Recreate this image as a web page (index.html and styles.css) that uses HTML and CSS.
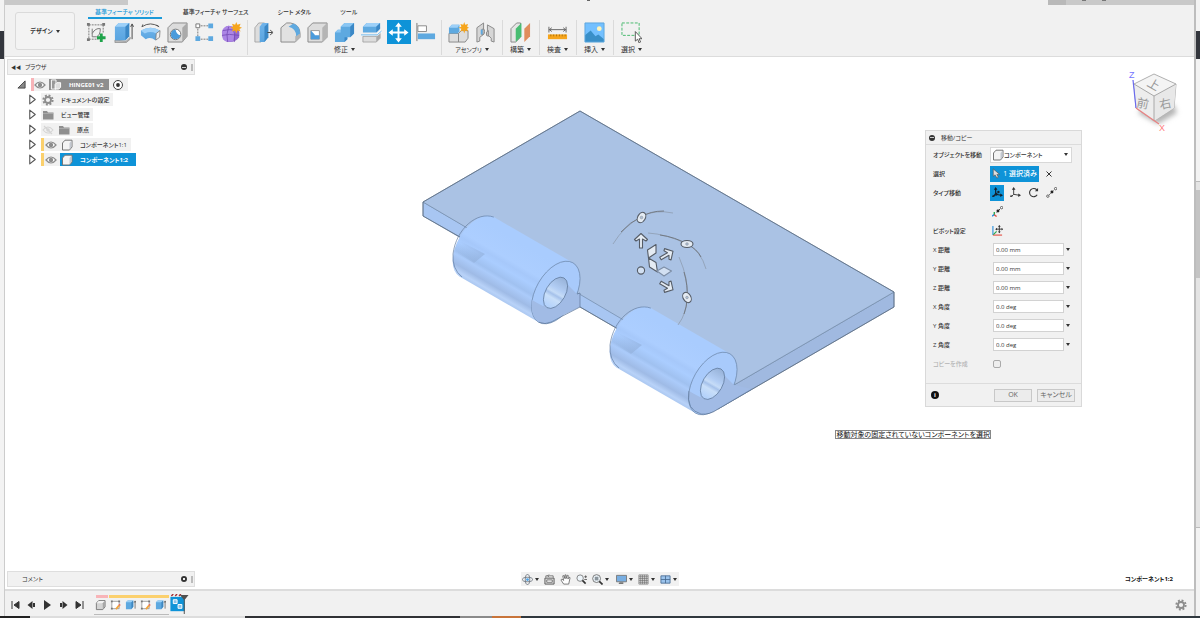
FILE: index.html
```html
<!DOCTYPE html>
<html lang="ja">
<head>
<meta charset="utf-8">
<title>HINGE01 v2</title>
<link rel="stylesheet" href="styles.css">
</head>
<body>
<svg class="defs" aria-hidden="true">
  <defs>
    <symbol id="i-eye" viewBox="0 0 12 12"><path d="M1 6Q6 0 11 6Q6 12 1 6Z" fill="#fff" stroke="#8c8c8c" stroke-width="1.2"/><circle cx="6" cy="6" r="2.2" fill="#8c8c8c"/></symbol>
    <symbol id="i-eyeoff" viewBox="0 0 12 12"><path d="M1 6Q6 0 11 6Q6 12 1 6ZM2 2L10 10" fill="none" stroke="#d4d4d4" stroke-width="1.1"/><circle cx="6" cy="6" r="1.8" fill="#d4d4d4"/></symbol>
    <symbol id="i-folder" viewBox="0 0 12 12"><path d="M1 2H5L6 3.5H11.500V10.500H1Z" fill="#8f8f8f"/><path d="M1 4.500H11" stroke="#bbb" stroke-width=".6"/></symbol>
    <symbol id="i-part" viewBox="0 0 12 12"><path d="M1.500 4L4 1.200H11V8L8.500 11H1.500Z" fill="#f4f4f4" stroke="#777" stroke-linejoin="round"/><path d="M8.500 4L10.500 1.700V8L8.500 10.500Z" fill="#c3c8d0"/></symbol>
    <symbol id="i-solid" viewBox="0 0 12 12"><path d="M1.500 4L4 1.200H11V8L8.500 11H1.500Z" fill="#d3d3d3" stroke="#777" stroke-linejoin="round"/><path d="M1.800 4L4 1.500H10.500L8.500 4Z" fill="#f0f0f0"/><path d="M8.500 4L10.500 1.700V8L8.500 10.500Z" fill="#a5a5a5"/></symbol>
    <symbol id="i-gear" viewBox="0 0 12 12"><circle cx="6" cy="6" r="4.600" fill="none" stroke="#8d8d8d" stroke-width="2" stroke-dasharray="1.900 1.710"/><circle cx="6" cy="6" r="3" fill="none" stroke="#8d8d8d" stroke-width="1.800"/></symbol>
    <symbol id="i-tri" viewBox="0 0 8 10"><path d="M1.500 1L6.500 5L1.500 9Z" fill="#fff" stroke="#555" stroke-linejoin="round"/></symbol>
    <symbol id="i-sketch" viewBox="0 0 12 12"><path d="M2 2H10V10H2Z" fill="#fff" stroke="#888" stroke-width=".8"/><path d="M1 1h2v2h-2zM9 1h2v2h-2zM1 9h2v2h-2z" fill="#777"/><path d="M6.500 10.500L10 6.500" stroke="#f2a33a" stroke-width="2"/><path d="M10 6.500L11 5.400" stroke="#e7665c" stroke-width="2"/></symbol>
    <symbol id="i-extr" viewBox="0 0 12 12"><path d="M1 3L3 1H9V8L7 10.500H1Z" fill="#5ea9e0"/><path d="M1 3L3 1H9L7 3Z" fill="#9bd0f5"/><path d="M7 3L9 1V8L7 10.500Z" fill="#3d86c0"/><path d="M11 10V2M10 3.500L11 1.500L12 3.500" fill="none" stroke="#555" stroke-width=".8"/></symbol>
    <linearGradient id="g-blue" x2="0" y2="1"><stop stop-color="#6fb3ea"/><stop offset="1" stop-color="#5aa5e0"/></linearGradient>
    <linearGradient id="g-cyl" gradientUnits="userSpaceOnUse" x1="534" y1="250" x2="499" y2="310">
      <stop stop-color="#a9ccfe"/><stop offset=".3" stop-color="#acceff"/><stop offset=".37" stop-color="#a6c8fa"/><stop offset=".45" stop-color="#aacdff"/><stop offset=".57" stop-color="#a0c1f0"/><stop offset=".62" stop-color="#abcbfa"/><stop offset=".74" stop-color="#9fbbe6"/><stop offset=".82" stop-color="#b8d2f8"/><stop offset=".9" stop-color="#a3c1ec"/><stop offset="1" stop-color="#acd0ff"/>
    </linearGradient>
    <linearGradient id="g-patch" gradientUnits="userSpaceOnUse" x1="458" y1="245" x2="484" y2="260"><stop stop-color="#88a4cc" stop-opacity="0"/><stop offset="1" stop-color="#88a4cc" stop-opacity=".5"/></linearGradient>
    <linearGradient id="g-hole" gradientUnits="userSpaceOnUse" x1="-15" y1="0" x2="15" y2="0">
      <stop stop-color="#b4d2fb"/><stop offset=".3" stop-color="#c9dff9"/><stop offset=".42" stop-color="#a5c1ea"/><stop offset=".5" stop-color="#c6dcf7"/><stop offset=".65" stop-color="#b2cdf4"/><stop offset="1" stop-color="#9bb6dc"/>
    </linearGradient>
  </defs>
</svg>

<div class="desktop">
  <div class="edge edge-left"><i class="edge-dark"></i></div>
  <div class="app">
    <header class="header">
      <div class="titlebar"><span class="tb-left"></span><span class="tb-mark"></span><span class="tb-right"><i></i><b></b><b></b></span></div>
      <div class="ribbon">
        <button class="workspace">デザイン <span class="caret"></span></button>
        <div class="ribbon-main">
          <nav class="tabs">
            <button class="tab active">基準フィーチャ ソリッド</button>
            <button class="tab">基準フィーチャ サーフェス</button>
            <button class="tab">シート メタル</button>
            <button class="tab">ツール</button>
          </nav>
          <div class="groups">
            <section class="group">
              <div class="tools">
                <button class="tool" aria-label="スケッチを作成"><svg viewBox="0 0 22 22"><path d="M3 3H18M3 3V18H13M18 3V12" fill="none" stroke="#777" stroke-dasharray="2 1"/><path d="M6.500 7V15.500H11Q15 14 15 7Q10 6 6.500 12" fill="none" stroke="#777"/><path d="M1 1h3v3H1zM17 1h3v3h-3zM1 17h3v3H1z" fill="#777"/><path d="M16 12V21M11.500 16.500H20.500" stroke="#1ea34a" stroke-width="3"/></svg></button>
                <button class="tool" aria-label="押し出し"><svg viewBox="0 0 22 22"><path d="M2 19L14 20L18 16V18L14 21.500H2Z" fill="#bbb" stroke="#777" stroke-width=".6"/><path d="M2 5L6 1H17V15L13 19H2Z" fill="url(#g-blue)"/><path d="M2 5L6 1H17L13 5Z" fill="#9dd0f8"/><path d="M13 5L17 1V15L13 19Z" fill="#3b88c6"/><path d="M20 18V3M18.500 5L20 2L21.500 5" fill="none" stroke="#444"/></svg></button>
                <button class="tool" aria-label="回転"><svg viewBox="0 0 22 22"><path d="M2 5Q11 -1 20 5M2 5L3 2.500M20 5L17.500 3" fill="none" stroke="#555"/><path d="M1 9Q11 3 21 9L20 15L16 19Q11 15 6 18L1 14Z" fill="url(#g-blue)"/><path d="M1 9Q11 3 21 9L17 12Q11 9 5 12Z" fill="#9dd0f8"/><path d="M21 9L17 12L16.500 19L20.500 16Z" fill="#eee" stroke="#777" stroke-width=".8"/></svg></button>
                <button class="tool" aria-label="穴"><svg viewBox="0 0 22 22"><path d="M1 6L6 1H21V15L16 21H1Z" fill="#dcdcdc" stroke="#888"/><path d="M16 6L21 1V15L16 21Z" fill="#aaa"/><circle cx="9" cy="13" r="5.500" fill="#fff" stroke="#777"/><path d="M9 8Q10 13 14 14A5 5 0 1 1 9 8Z" fill="#4b9bdb"/></svg></button>
                <button class="tool" aria-label="パターン"><svg viewBox="0 0 22 22"><path d="M4 4H18M4 4V18M4 18H18" fill="none" stroke="#777" stroke-dasharray="2 1"/><path d="M2 2h4v4H2z" fill="#fff" stroke="#777"/><path d="M15 1.500h5v5h-5zM1.500 15h5v5h-5zM15 15h5v5h-5z" fill="#5ea9e0"/></svg></button>
                <button class="tool" aria-label="フォームを作成"><svg viewBox="0 0 22 22"><path d="M1 11Q2 5 8 4L17 6Q20 9 19 16Q16 21 9 21Q1 21 1 11Z" fill="#9369cf"/><path d="M1 11Q2 5 8 4L16 6Q14 10 13 20Q6 22 2 18Z" fill="#ac86e5"/><path d="M1 14Q8 12 19 14M7 21Q5 13 8 5M14 21Q15 13 13 7M2 9Q8 7 17 9" fill="none" stroke="#7248b3" stroke-width=".8"/><path d="M16 0L17.200 3L20.500 1.800L19.300 5L22 6L19.300 7.300L20.500 10L17.200 9L16 12L14.800 9L11.500 10L12.700 7L10 6L12.700 4.700L11.500 1.800L14.800 3Z" fill="#f6a51c"/></svg></button>
              </div>
              <button class="group-name">作成<span class="caret"></span></button>
            </section>
            <section class="group">
              <div class="tools">
                <button class="tool" aria-label="プレス"><svg viewBox="0 0 22 22"><path d="M2 6L6 1H12V17L8 21H2Z" fill="#ddd" stroke="#999" stroke-width=".8"/><path d="M7 5L10 1H16V16L12 21H7Z" fill="url(#g-blue)"/><path d="M12 5L16 1V16L12 21Z" fill="#3b88c6"/><path d="M15 11H20M18 8.500L21 11L18 13.500" fill="none" stroke="#444"/></svg></button>
                <button class="tool" aria-label="フィレット"><svg viewBox="0 0 22 22"><path d="M1 6L7 1H11Q21 3 21 12V16L16 21H1Z" fill="#e1e1e1" stroke="#888"/><path d="M16 15L21 12V16L16 21Z" fill="#b5b5b5"/><path d="M9 5L14 1.500Q21 4 21 12L17 15Q17 7 9 5Z" fill="#5ea9e0"/></svg></button>
                <button class="tool" aria-label="シェル"><svg viewBox="0 0 22 22"><path d="M1 6L6 1H21V16L16 21H1Z" fill="#ddd" stroke="#888"/><path d="M16 6L21 1V16L16 21Z" fill="#b5b5b5"/><path d="M4 9H13V18H4Z" fill="#fff" stroke="#999"/><path d="M4 9L8 13V18H4ZM8 14H13V18H4Z" fill="#4b9bdb"/></svg></button>
                <button class="tool" aria-label="結合"><svg viewBox="0 0 22 22"><path d="M7 5L11 1H21V12L17 16H14V18L11 21H1V11L4 8H7Z" fill="#5ea9e0"/><path d="M7 5L11 1H21L17 5ZM1 11L4 8H7V11Z" fill="#8ac6f3"/><path d="M17 5L21 1V12L17 16ZM11 16H14V18L11 21Z" fill="#3b88c6"/></svg></button>
                <button class="tool" aria-label="分割"><svg viewBox="0 0 22 22"><path d="M2 5L6 1H20V7L16 11H2Z" fill="#5ea9e0"/><path d="M2 5L6 1H20L16 5Z" fill="#9dd0f8"/><path d="M16 5L20 1V7L16 11Z" fill="#3b88c6"/><path d="M2 15H16L20 11V17L16 21H2Z" fill="#ddd" stroke="#999" stroke-width=".8"/><path d="M16 15L20 11V17L16 21Z" fill="#aaa"/><path d="M0 13.500H17L21.500 9.500" fill="none" stroke="#fff" stroke-width="2"/><path d="M0 13.500H17L21.500 9.500" fill="none" stroke="#62afe5"/></svg></button>
                <button class="tool selected" aria-label="移動"><svg viewBox="0 0 22 22"><path d="M11 3V19M3 11H19" stroke="#fff" stroke-width="2"/><path d="M11 0.500L14.500 5H7.500ZM11 21.500L7.500 17H14.500ZM.5 11L5 7.500V14.500ZM21.500 11L17 14.500V7.500Z" fill="#fff"/></svg></button>
                <button class="tool" aria-label="位置合わせ"><svg viewBox="0 0 22 22"><path d="M2 1V20" stroke="#777"/><path d="M3 4H12V10H3Z" fill="#fff" stroke="#888"/><path d="M3 12H21V18H3Z" fill="#5ea9e0"/></svg></button>
              </div>
              <button class="group-name">修正<span class="caret"></span></button>
            </section>
            <section class="group pair">
              <div class="tools">
                <button class="tool" aria-label="新規コンポーネント"><svg viewBox="0 0 22 22"><path d="M1 12H11V21H1ZM11 12L14 9H21V17L18 21H11Z" fill="#ddd" stroke="#888"/><path d="M1 6L4 3H12V10L10 12H1Z" fill="#5ea9e0"/><path d="M1 6L4 3H12L10 6Z" fill="#9dd0f8"/><path d="M17 0L18 3L21 2L20 5L22 6L20 7L21 10L18 9L17 12L16 9L13 10L14 7L11 6L14 5L13 2L16 3Z" fill="#f6a51c"/></svg></button>
                <button class="tool" aria-label="ジョイント"><svg viewBox="0 0 22 22"><path d="M2 6L9 1V13L5 16V20L2 21ZM20 7L13 3V13L17 17V20L20 21Z" fill="#d6d6d6" stroke="#888"/><path d="M7 8Q10 6 10 10Q10 14 7 13Z" fill="#b5b5b5" stroke="#888"/><path d="M7 8V13" stroke="#5ea9e0" stroke-width="2"/><path d="M14 9Q11 10 12 14L14 15Z" fill="#ccc" stroke="#888"/></svg></button>
              </div>
              <button class="group-name">アセンブリ<span class="caret"></span></button>
            </section>
            <section class="group single">
              <div class="tools"><button class="tool" aria-label="構築"><svg viewBox="0 0 22 22"><path d="M1 7L7 1H11V16L6 21H1Z" fill="#e5e5e5" stroke="#888"/><path d="M6 7L12 1V15L6 21Z" fill="#48bd72"/><path d="M15 7L21 1V15L15 21Z" fill="#e08d5c"/></svg></button></div>
              <button class="group-name">構築<span class="caret"></span></button>
            </section>
            <section class="group single">
              <div class="tools"><button class="tool" aria-label="検査"><svg viewBox="0 0 22 22"><path d="M2 5V11M20 5V11M2 8H20M5 6L2.500 8L5 10M17 6L19.500 8L17 10" fill="none" stroke="#666"/><path d="M1 13H21V18H1Z" fill="#f6a51c"/><path d="M4 13V15M7 13V15M10 13V15M13 13V15M16 13V15M19 13V15" stroke="#925f00" stroke-width=".7"/></svg></button></div>
              <button class="group-name">検査<span class="caret"></span></button>
            </section>
            <section class="group single">
              <div class="tools"><button class="tool" aria-label="挿入"><svg viewBox="0 0 22 22"><path d="M1 1H21V21H1Z" fill="#73c0ff"/><path d="M1 14L7 9L12 15L15 13L21 18V21H1Z" fill="#398fc8"/><circle cx="16" cy="7" r="2.500" fill="#fff4ba"/><path d="M1 1H21V21H1Z" fill="none" stroke="#5da7dd"/></svg></button></div>
              <button class="group-name">挿入<span class="caret"></span></button>
            </section>
            <section class="group single last">
              <div class="tools"><button class="tool" aria-label="選択"><svg viewBox="0 0 22 22"><path d="M1 1H19V14H1Z" fill="none" stroke="#45b96c" stroke-dasharray="3 1.500"/><path d="M15 10V20L17.500 18L19 22L20.500 21L19 17.500H22Z" fill="#fff" stroke="#444" stroke-width=".9"/></svg></button></div>
              <button class="group-name">選択<span class="caret"></span></button>
            </section>
          </div>
        </div>
      </div>
    </header>

    <main class="canvas">
      <aside class="browser">
        <div class="panel-bar"><span class="rewind">◀◀</span><span>ブラウザ</span><button class="dot minus" aria-label="閉じる"></button><i class="grip"></i></div>
        <ul class="tree">
          <li class="root"><svg class="open" viewBox="0 0 10 10"><path d="M9 1V9H1Z" fill="#888" stroke="#444"/></svg><span class="chip"><i class="bar red"></i><svg class="ico"><use href="#i-eye"/></svg><span class="doc"><svg viewBox="0 0 14 12"><path d="M2 1H7V11H2Z" fill="#999" stroke="#fff"/><path d="M6 6L8 4H12V9L10 11H6Z" fill="#ddd" stroke="#fff"/></svg>HINGE01 v2</span><svg class="ico" viewBox="0 0 12 12"><circle cx="6" cy="6" r="4.500" fill="#fff" stroke="#444"/><circle cx="6" cy="6" r="1.900" fill="#333"/></svg></span></li>
          <li><svg class="tri"><use href="#i-tri"/></svg><span class="chip"><svg class="ico"><use href="#i-gear"/></svg><span class="name">ドキュメントの設定</span></span></li>
          <li><svg class="tri"><use href="#i-tri"/></svg><span class="chip"><svg class="ico"><use href="#i-folder"/></svg><span class="name">ビュー管理</span></span></li>
          <li><svg class="tri"><use href="#i-tri"/></svg><span class="chip"><svg class="ico"><use href="#i-eyeoff"/></svg><svg class="ico"><use href="#i-folder"/></svg><span class="name">原点</span></span></li>
          <li><svg class="tri"><use href="#i-tri"/></svg><span class="chip"><i class="bar yellow"></i><svg class="ico"><use href="#i-eye"/></svg><svg class="ico"><use href="#i-part"/></svg><span class="name">コンポーネント1:1</span></span></li>
          <li><svg class="tri"><use href="#i-tri"/></svg><span class="chip"><i class="bar yellow"></i><svg class="ico"><use href="#i-eye"/></svg><span class="picked"><svg class="ico"><use href="#i-part"/></svg><span class="name">コンポーネント1:2</span></span></span></li>
        </ul>
      </aside>

      <svg class="model" viewBox="415 105 485 315" role="img" aria-label="ヒンジ">
        <g stroke="#7189a8" stroke-width=".7" stroke-linejoin="round">
          <path d="M423 202L737 384V398L423 216Z" fill="#a8c6f2"/>
          <path d="M712 385L734 385L894 292V307L718 409Q710 414 702 414Z" fill="#a0b9e0"/>
          <path d="M423 202L580 111L894 292L734 385Z" fill="#aac2e4"/>
        </g>
        <path d="M423 202L580 111L894 292V307L718 409M423 202V216L460 237M580 307L618 329" fill="none" stroke="#5d6d82" stroke-width=".8"/>
        <g id="knuckle">
          <path d="M493.800 217.100L573 262.800L538.700 322.200L459.500 276.500A34.300 19.800 -60 0 1 493.800 217.100Z" fill="url(#g-cyl)"/>
          <path d="M458 240L485 254L474 263L454 251Z" fill="url(#g-patch)"/>
          <path d="M462 277Q452 269 453 254C456 229 477 211 493.800 217.100" fill="none" stroke="#6580a3" stroke-width=".7"/>
          <ellipse cx="555.800" cy="292.500" rx="34.300" ry="19.800" transform="rotate(-60 555.800 292.500)" fill="#a8cafb" stroke="#6d88ab" stroke-width=".7"/>
        </g>
        <path d="M532 300Q537 303 543 306L568 285L577 294L580 293V307L549 322C537 327 530 315 532 300Z" fill="#a1bbe5"/>
        <path d="M577 294L580 293V307L551 322Q545 325 538.700 322.200" fill="none" stroke="#5f7798" stroke-width=".7"/>
        <use href="#knuckle" x="157" y="91"/>
        <path d="M689 391Q694 394 700 397L725 376L734 385L752 389L718 409C699 420 688 411 689 391Z" fill="#a1bbe5"/>
        <path d="M752 389L718 409Q710 415 701 414Q686 410 689 391" fill="none" stroke="#5f7798" stroke-width=".7"/>
        <g stroke="#5e7899" stroke-width=".7" fill="url(#g-hole)">
          <ellipse rx="17.100" ry="9.900" transform="translate(555.500 292.800) rotate(-60)"/>
          <ellipse rx="17.100" ry="9.900" transform="translate(712.500 383.800) rotate(-60)"/>
        </g>
        <g fill="none" stroke="#8590a0">
          <path d="M613 244Q624 226 641 217Q654 209 673 213M648 233Q666 234 687 244Q701 251 706 269M679 257Q689 280 687 297Q687 313 678 325" stroke-width=".6"/>
          <path d="M621 232Q630 222 641 217Q650 211 664 211M660 235Q675 237 687 244Q697 249 701 257M684 272Q688 286 687 297Q687 307 684 314" stroke="#6e747c" stroke-width=".9"/>
        </g>
        <g fill="#e4ebf3" stroke="#555c66" stroke-width="1.100" stroke-linejoin="round">
          <ellipse cx="641.500" cy="217.500" rx="5.500" ry="3.800" transform="rotate(-60 641.500 217.500)"/>
          <ellipse cx="687" cy="244" rx="6" ry="3.500"/>
          <ellipse cx="687" cy="297.500" rx="5.500" ry="3.800" transform="rotate(60 687 297.500)"/>
          <path id="arrow" d="M639.500 248V239L636 241L634.500 239.500L641 233.500L647.500 239.500L646 241L642.500 239V248Z"/>
          <use href="#arrow" transform="translate(666.500 255) rotate(60) translate(-641 -241)"/>
          <use href="#arrow" transform="translate(666.500 286) rotate(120) translate(-641 -241)"/>
          <path d="M647.500 250L656 244.500V253L648.500 258ZM648.500 258L656 262.500L657.500 272L649.500 267Z"/>
          <path d="M657 271L664 267L671.500 271L664 276Z" fill="#d2e0f2" stroke="#7d8ea6"/>
          <circle cx="641" cy="270.500" r="3.600" fill="#d2e0f2"/>
        </g>
        <g fill="#abc1dc" stroke="#888" stroke-width=".5"><circle cx="641.500" cy="217.500" r="1.300"/><circle cx="687" cy="244" r="1.300"/><circle cx="687" cy="297.500" r="1.300"/></g>
      </svg>

      <svg class="viewcube" viewBox="0 0 60 72" role="img" aria-label="ビューキューブ">
        <defs><filter id="soft" x="-30%" y="-50%" width="160%" height="200%"><feGaussianBlur stdDeviation="2.500"/></filter></defs>
        <path d="M14 48L34 59L53 48L50 40H20Z" fill="#b5b5b5" filter="url(#soft)"/>
        <path d="M10 19L30 9L52 19L50 43L30 56L12 43Z" fill="#f4f4f4" stroke="#b0b0b0" stroke-linejoin="round"/>
        <path d="M10 19L30 31L52 19L50 43L30 56Z" fill="#e8e8e8"/>
        <path d="M10 19L30 31L30 56L12 43Z" fill="#ededed"/>
        <path d="M10 19L30 31L52 19M30 31V56" fill="none" stroke="#a8a8a8"/>
        <g class="cube-text"><text x="24" y="24" transform="rotate(30 30 19)" font-size="12">上</text><text x="13" y="43" font-size="12" transform="rotate(12 20 38)">前</text><text x="35" y="43" font-size="12" transform="rotate(-12 41 38)">右</text></g>
        <path d="M9 15L12 43" stroke="#6a6aee" stroke-width="1.200"/><path d="M12 43L35 59" stroke="#e88080" stroke-width="1.200"/>
        <text x="5" y="13" class="axis z">Z</text><text x="35" y="66" class="axis x">X</text>
      </svg>

      <form class="dialog">
        <div class="dialog-title"><i class="dot minus"></i>移動/コピー</div>
        <div class="fields">
          <div class="row"><label for="obj">オブジェクトを移動</label><span class="combo"><svg class="ico"><use href="#i-part"/></svg><select id="obj"><option>コンポーネント</option></select><i class="caret"></i></span></div>
          <div class="row"><span>選択</span><span class="line"><button type="button" class="pick"><svg viewBox="0 0 8 12"><path d="M1 1V9L3 7.500L5 11L6.500 10L5 7H8Z" fill="#ddd" stroke="#555" stroke-width=".7"/></svg>1 選択済み</button><button type="button" class="clear" aria-label="解除"><svg viewBox="0 0 6 6"><path d="M.5 .5L5.500 5.500M5.500 .5L.5 5.500" stroke="#333"/></svg></button></span></div>
          <div class="row"><span>タイプ移動</span><span class="line types">
            <button type="button" class="type on" aria-label="自由移動"><svg viewBox="0 0 12 12"><path d="M4 1.500V8L10 9M4 8L1.500 10" fill="none" stroke="#15212c" stroke-width="1.300"/><path d="M4 0L6 3H2ZM12 9L9 11V7ZM0 11L3 10.500L1 8.500Z" fill="#15212c"/><circle cx="7" cy="5.500" r="1.300" fill="#15212c"/><circle cx="4.500" cy="8" r="1.600" fill="#15212c"/></svg></button>
            <button type="button" class="type" aria-label="移動"><svg viewBox="0 0 12 12"><path d="M4 2V8L10 9M4 8L2 10" fill="none" stroke="#333"/><path d="M4 0L6 3H2ZM12 9L9 11V7ZM0 11L3 10.500L1 8.500Z" fill="#333"/></svg></button>
            <button type="button" class="type" aria-label="回転"><svg viewBox="0 0 12 12"><path d="M9.500 3A4.500 4.500 0 1 0 10 8.500" fill="none" stroke="#333" stroke-width="1.200"/><path d="M11 1V4.500H7.500Z" fill="#333"/></svg></button>
            <button type="button" class="type" aria-label="点から点"><svg viewBox="0 0 12 12"><path d="M3 9L9 3" stroke="#333" stroke-dasharray="1.500 1"/><circle cx="2" cy="10" r="1.300" fill="#fff" stroke="#555"/><circle cx="10.500" cy="1.800" r="1.300" fill="#fff" stroke="#555"/><circle cx="6.500" cy="5.500" r="1.600" fill="#222"/></svg></button></span></div>
          <div class="row"><span></span><span class="line"><button type="button" class="type" aria-label="点から位置"><svg viewBox="0 0 12 12"><path d="M5 7L9 3" stroke="#333"/><circle cx="10.500" cy="1.800" r="1.300" fill="#fff" stroke="#555"/><circle cx="6.500" cy="5.500" r="1.600" fill="#222"/><path d="M2.500 6.500V10" stroke="#26a84a" stroke-width="1.500"/><path d="M0 11L2.500 9.500" stroke="#2990dd" stroke-width="1.500"/><path d="M2.500 9.500L5 11.500" stroke="#e34d42" stroke-width="1.500"/></svg></button></span></div>
          <div class="row"><span>ピボット設定</span><span class="line"><button type="button" class="type" aria-label="ピボット設定"><svg viewBox="0 0 12 12"><path d="M1 1V11" stroke="#2990dd" stroke-width="1.200"/><path d="M1 11H11" stroke="#e34d42" stroke-width="1.200"/><path d="M1.500 10.500L5 7" stroke="#26a84a" stroke-width="1.200"/><path d="M8 1V8M4.500 4.500H11.500" stroke="#333"/><path d="M8 0L9.500 2H6.500ZM8 9L6.500 7H9.500ZM3.500 4.500L5.500 3V6ZM12 4.500L10.500 6V3Z" fill="#333"/></svg></button></span></div>
          <div class="row"><label for="dx">X 距離</label><span class="num"><input id="dx" value="0.00 mm"><i class="caret"></i></span></div>
          <div class="row"><label for="dy">Y 距離</label><span class="num"><input id="dy" value="0.00 mm"><i class="caret"></i></span></div>
          <div class="row"><label for="dz">Z 距離</label><span class="num"><input id="dz" value="0.00 mm"><i class="caret"></i></span></div>
          <div class="row"><label for="ax">X 角度</label><span class="num"><input id="ax" value="0.0 deg"><i class="caret"></i></span></div>
          <div class="row"><label for="ay">Y 角度</label><span class="num"><input id="ay" value="0.0 deg"><i class="caret"></i></span></div>
          <div class="row"><label for="az">Z 角度</label><span class="num"><input id="az" value="0.0 deg"><i class="caret"></i></span></div>
          <div class="row off"><label for="copy">コピーを作成</label><span class="num"><input id="copy" type="checkbox" disabled></span></div>
        </div>
        <div class="dialog-foot"><span class="info">i</span><button type="button">OK</button><button type="button">キャンセル</button></div>
      </form>

      <div class="hint">移動対象の固定されていないコンポーネントを選択</div>

      <div class="panel-bar comment"><span>コメント</span><button class="dot plus" aria-label="追加"></button><i class="grip"></i></div>

      <div class="viewbar">
        <button aria-label="オービット"><svg viewBox="0 0 12 12"><ellipse cx="6" cy="6" rx="5.500" ry="2.400" fill="none" stroke="#5c6670" stroke-width=".8"/><ellipse cx="6" cy="6" rx="2.400" ry="5.500" fill="none" stroke="#5c6670" stroke-width=".8"/><circle cx="6" cy="6" r="1.500" fill="#4ca2e8"/></svg><i class="caret"></i></button>
        <button aria-label="ビュー正面"><svg viewBox="0 0 12 12"><path d="M1 4.500H11V11H1Z" fill="#ddd" stroke="#555"/><path d="M3 6.500H9V9H3Z" fill="#fff" stroke="#555" stroke-width=".8"/><path d="M2 4V2H10V4M4 2L5.500 .5M4 2L5.500 3.500" fill="none" stroke="#555" stroke-width=".8"/></svg></button>
        <button aria-label="画面移動"><svg viewBox="0 0 12 12"><path d="M4 11L1 6.500L2 5.500L4 7L3 2L4.200 1.700L5.400 5V1H6.600V5L8 1.300L9 1.600L8.600 5.500L10 3.500L11 4L9.500 11Z" fill="#fff" stroke="#555" stroke-width=".8" stroke-linejoin="round"/></svg></button>
        <button aria-label="ズーム"><svg viewBox="0 0 12 12"><circle cx="4.500" cy="4.500" r="3.500" fill="#eef5fa" stroke="#666" stroke-width=".8"/><path d="M7 7L10.500 10.500" stroke="#333" stroke-width="1.800"/><path d="M9 3H12M10.500 1.500V4.500M9 6H12" stroke="#444" stroke-width=".8"/></svg></button>
        <button aria-label="フィット"><svg viewBox="0 0 12 12"><circle cx="5" cy="5" r="4.300" fill="#eef5fa" stroke="#666" stroke-width=".9"/><path d="M3 3H7V7H3Z" fill="#8b959c"/><path d="M8 8L11.500 11.500" stroke="#333" stroke-width="1.800"/></svg><i class="caret"></i></button>
        <button class="wide" aria-label="表示設定"><svg viewBox="0 0 12 12"><path d="M.5 1.500H11.500V8.500H.5Z" fill="#78aee2" stroke="#777"/><path d="M4 9H8V11H3V10Z" fill="#777"/></svg><i class="caret"></i></button>
        <button aria-label="グリッド"><svg viewBox="0 0 12 12"><path d="M1 1H11V11H1ZM1 3H11M1 5H11M1 7H11M1 9H11M3 1V11M5 1V11M7 1V11M9 1V11" fill="#eee" stroke="#666" stroke-width=".7"/></svg><i class="caret"></i></button>
        <button aria-label="ビューポート"><svg viewBox="0 0 12 12"><path d="M1 2H11V10H1ZM6 2V10M1 6H11" fill="#9bc3ec" stroke="#47698f" stroke-width=".9"/></svg><i class="caret"></i></button>
      </div>
      <div class="status">コンポーネント1:2</div>
    </main>

    <footer class="timeline">
      <div class="play">
        <button aria-label="最初"><svg viewBox="0 0 10 10"><path d="M1.500 1V9M8.500 1.500V8.500L3.500 5Z" fill="#333" stroke="#333"/></svg></button>
        <button aria-label="前"><svg viewBox="0 0 10 10"><path d="M6 1V9L1 5ZM6.500 3H8.500V7H6.500Z" fill="#333"/></svg></button>
        <button aria-label="再生"><svg viewBox="0 0 10 10"><path d="M1.500 0V10L8.500 5Z" fill="#333"/></svg></button>
        <button aria-label="次"><svg viewBox="0 0 10 10"><path d="M4 1V9L9 5ZM1.500 3H3.500V7H1.500Z" fill="#333"/></svg></button>
        <button aria-label="最後"><svg viewBox="0 0 10 10"><path d="M8.500 1V9M1.500 1.500V8.500L6.500 5Z" fill="#333" stroke="#333"/></svg></button>
      </div>
      <div class="steps">
        <span class="step red"><svg><use href="#i-solid"/></svg></span>
        <span class="step"><svg><use href="#i-sketch"/></svg></span>
        <span class="step"><svg><use href="#i-extr"/></svg></span>
        <span class="step"><svg><use href="#i-sketch"/></svg></span>
        <span class="step"><svg><use href="#i-extr"/></svg></span>
        <svg class="current" viewBox="0 0 20 22"><path d="M2 2L4 0M6 2L8 0M10 2L12 0" stroke="#a52f33" stroke-width="1.500"/><path d="M1 3H16V18H1Z" fill="#0e93d8"/><path d="M4 6H8V10H4ZM9 11H13V15H9Z" fill="#8bc3e8" stroke="#fff"/><path d="M11 1H20L16 6V21H15V6Z" fill="#505050"/></svg>
      </div>
      <button class="settings" aria-label="設定"><svg class="ico"><use href="#i-gear"/></svg></button>
    </footer>
  </div>
  <div class="edge edge-right"><i class="edge-dark"></i><i class="edge-track"><b></b></i></div>
</div>
<div class="taskbar"></div>
</body>
</html>
```

FILE: styles.css
```css
* { box-sizing: border-box; }
body {
  margin: 0;
  min-height: 100vh;
  display: flex;
  flex-direction: column;
  background: #fff;
  color: #333;
  font: 6px/10px "Open Sans", "Noto Sans CJK JP", sans-serif;
  font-feature-settings: "palt";
}
button, input, select { font: inherit; font-feature-settings: inherit; color: inherit; margin: 0; padding: 0; border: 0; background: none; border-radius: 0; }
button { display: inline-flex; align-items: center; justify-content: center; white-space: nowrap; }
svg { display: block; flex: none; }
.defs { position: absolute; width: 0; height: 0; }
.desktop { flex: 1; display: flex; }
.app { flex: 1; min-width: 0; display: flex; flex-direction: column; }

.edge { width: 5px; background: #f3f3f3; padding-top: 31px; }
.edge-left { border-right: 1px solid #ccc; }
.edge-right { width: 6px; border-left: 2px solid #bdbdbd; display: flex; flex-direction: column; }
.edge-dark { display: block; height: 28px; background: #33363d; }
.edge-track { flex: 1; margin: 122px 0 88px; background: #e4e4e4; border-block: 1px solid #bbb; }
.edge-track b { display: block; height: 88px; margin-top: 8px; background: #c4c4c4; }
.taskbar { height: 2px; background: linear-gradient(90deg, #222 0 30px, #ddd 30px 245px, #303235 245px 460px, #8a8a8a 460px 492px, #c8743a 492px 521px, #30383e 521px); }

.caret { display: inline-block; width: 0; height: 0; margin-left: 3px; border: 2px solid transparent; border-top: 3px solid #333; border-bottom: 0; }
.ico { width: 12px; height: 12px; }

.header { background: #f1f1f1; border-bottom: 1px solid #dcdcdc; }
.titlebar { display: flex; justify-content: space-between; height: 5px; }
.tb-left { width: 123px; background: #c9c9c9; }
.tb-mark { width: 3px; height: 1px; background: #666; }
.tb-right { width: 146px; display: flex; gap: 16px; background: #c9c9c9; }
.tb-right i { width: 18px; background: #b9b9b9; }
.tb-right b { width: 4px; height: 1px; background: #777; }
.ribbon { display: flex; height: 51px; }
.workspace { width: 60px; height: 38px; margin: 7px 13px 0 10px; border: 1px solid #dadada; border-radius: 3px; background: #f3f3f3; font-weight: 600; }
.ribbon-main { margin-left: -7px; }
.tabs { display: flex; gap: 14px; height: 14px; margin-left: 7px; }
.tab { padding: 2px 8px 0 7px; border-bottom: 2px solid transparent; font-weight: 500; }
.tab.active { color: #1b9ad9; border-color: #1b9ad9; }
.groups { display: flex; }
.group { height: 35px; padding: 0 2px; border-right: 1px solid #dadada; margin-top: 1px; display: flex; flex-direction: column; align-items: center; }
.group.pair { padding: 0 3px; }
.group.single { padding: 0 5px 0 4px; }
.group.last { border: 0; }
.tools { display: flex; }
.tool { width: 27px; height: 24px; }
.tool svg { width: 21px; height: 21px; }
.tool.selected { background: linear-gradient(#0e93d8, #0e93d8) center / 24px 24px no-repeat; }
.group-name { height: 11px; font-size: 7px; }
.pair .group-name { font-size: 6px; }

.canvas { position: relative; flex: 1; min-height: 532px; background: #fff; }
.browser { width: 188px; margin-left: 2px; padding-top: 2px; }
.panel-bar { display: flex; align-items: center; gap: 4px; width: 188px; height: 16px; padding: 0 1px 0 3px; background: #f1f1f1; border: 1px solid #dedede; }
.panel-bar button { margin-left: auto; }
.rewind { font-size: 5px; color: #333; }
.dot { width: 6px; height: 6px; border-radius: 50%; background: #333; display: inline-flex; align-items: center; justify-content: center; }
.dot.minus::after { content: ""; width: 4px; height: 1px; background: #ccc; }
.dot.plus::after { content: ""; width: 2px; height: 2px; background: #eee; }
.grip { width: 2px; height: 7px; background: #bbb; }
.tree { list-style: none; margin: 2px 0 0; padding: 0; }
.tree li { display: flex; align-items: center; gap: 4px; height: 15px; padding-left: 21px; }
.tree .root { padding-left: 10px; gap: 5px; }
.open { width: 9px; height: 9px; }
.tri { width: 9px; height: 11px; }
.chip { display: flex; align-items: center; gap: 4px; height: 13px; padding-right: 4px; background: #f1f1f1; font-weight: 500; }
.chip > .ico:first-child { margin-left: 1px; }
.bar { width: 3px; height: 13px; margin-right: -3px; }
.bar.red { background: #f8b4b8; }
.bar.yellow { background: #fbd06d; }
.root .chip { gap: 3px; }
.doc { display: flex; align-items: center; gap: 6px; height: 11px; padding-right: 6px; color: #fff; background: #8e8e8e; font-weight: 700; }
.doc svg { width: 14px; height: 11px; }
.name { padding-left: 3px; }
.picked { display: flex; align-items: center; gap: 4px; height: 13px; margin: 0 -4px 0 -1px; padding: 0 8px 0 1px; background: #0e93d8; color: #fff; font-weight: 700; }

.model { position: absolute; left: 410px; top: 48px; width: 485px; height: 315px; }
.viewcube { position: absolute; right: 10px; top: 8px; width: 60px; height: 72px; }
.cube-text { fill: #999; font-family: "Noto Sans CJK JP", sans-serif; }
.axis { font: 9px "Liberation Sans", sans-serif; }
.axis.z { fill: #7575ff; }
.axis.x { fill: #ff7d7d; }

.dialog { position: absolute; top: 73px; right: 112px; width: 157px; background: #f1f1f1; border: 1px solid #d9d9d9; }
.dialog-title { display: flex; align-items: center; gap: 6px; height: 14px; padding-left: 3px; border-bottom: 1px solid #dcdcdc; }
.fields { padding: 0 8px 10px 7px; }
.row { display: grid; grid-template-columns: 57px 1fr; align-items: center; height: 19px; white-space: nowrap; font-weight: 500; }
.line { display: flex; align-items: center; }
.combo { display: flex; align-items: center; width: 82px; height: 16px; padding: 0 3px 0 1px; background: #fff; border: 1px solid #d8d8d8; }
.combo select { flex: 1; min-width: 0; appearance: none; outline: 0; }
.pick { height: 16px; width: 49px; gap: 3px; background: #0e93d8; color: #fff; font-size: 7px; }
.pick svg { width: 8px; height: 11px; }
.clear { width: 20px; height: 14px; }
.clear svg { width: 6px; height: 6px; }
.types { gap: 4px; }
.type { width: 14px; height: 16px; }
.type svg { width: 11px; height: 11px; }
.type.on { background: #0e93d8; }
.num { display: flex; align-items: center; padding-left: 3px; }
.num input:not([type]) { width: 71px; height: 13px; padding-left: 2px; background: #fff; border: 1px solid #d2d2d2; }
.num .caret { margin-left: 2px; }
.off { color: #b4b4b4; }
.off input { appearance: none; width: 8px; height: 8px; border: 1px solid #aaa; border-radius: 2px; background: #eee; }
.dialog-foot { display: flex; align-items: center; gap: 5px; height: 23px; padding: 0 6px 0 5px; border-top: 1px solid #dcdcdc; }
.dialog-foot button { width: 38px; height: 13px; border: 1px solid #c8c8c8; background: #ececec; color: #666; font-size: 7px; }
.info { width: 8px; height: 8px; margin-right: auto; border-radius: 50%; background: #111; color: #fff; line-height: 8px; font-weight: 700; text-align: center; }

.hint { position: absolute; top: 373px; right: 203px; font-size: 7px; line-height: 7px; border: 1px solid #888; background: #fff; color: #111; white-space: nowrap; }
.comment { position: absolute; left: 2px; bottom: 2px; padding-left: 14px; }
.viewbar { position: absolute; left: 516px; bottom: 3px; display: flex; align-items: center; gap: 5px; height: 14px; padding: 0 2px 0 1px; background: #f1f1f1; }
.viewbar svg { width: 11px; height: 11px; }
.viewbar .wide { margin-left: 2px; }
.viewbar .caret { margin-left: 2px; }
.status { position: absolute; right: 21px; bottom: 5px; color: #111; font-weight: 700; }

.timeline { display: flex; align-items: flex-start; height: 27px; padding: 4px 7px 0 5px; background: #f1f1f1; border-top: 2px solid #dcdcdc; }
.play { display: flex; gap: 5px; padding-top: 5px; }
.play svg { width: 11px; height: 10px; }
.steps { display: flex; margin-left: 9px; }
.step { width: 15px; height: 20px; padding: 4px 1px 0 1px; background: linear-gradient(#fbd06d, #fbd06d) top / 100% 3px no-repeat; border-bottom: 1px solid #bbb; }
.step.red { background-image: linear-gradient(#f8b4b8, #f8b4b8); background-size: 12px 3px; }
.step svg { width: 11px; height: 12px; }
.current { width: 20px; height: 21px; margin-top: -1px; }
.settings { margin: 4px 0 0 auto; }
```
